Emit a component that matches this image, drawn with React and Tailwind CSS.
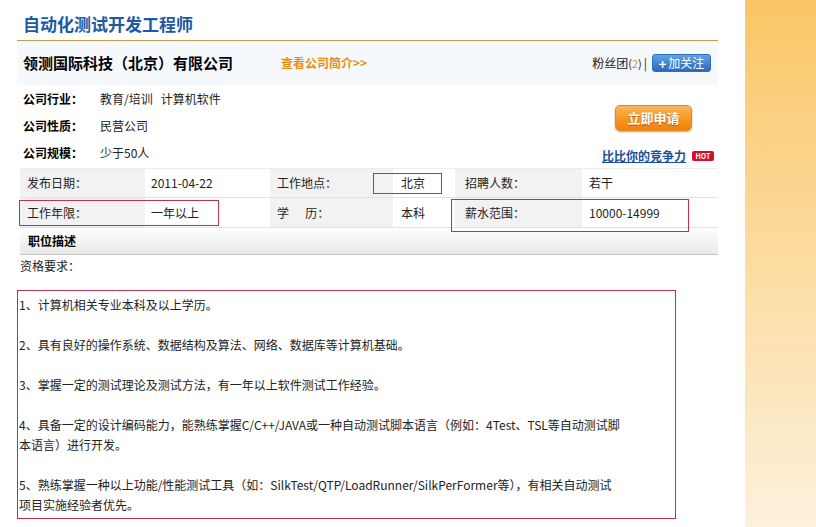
import React from "react"

const FONT = { fontFamily: '"Noto Sans CJK SC", "Noto Sans", sans-serif' }

function InfoRow({ label, value }) {
  return (
    <div className="h-[27px] flex items-center text-[12px]">
      <span className="w-[77px] font-bold text-black">{label}</span>
      <span className="text-[#222]">{value}</span>
    </div>
  )
}

function Cell({ w, gray, pl, children }) {
  return (
    <div className={"h-full flex items-center text-[12px] text-[#222] " + (gray ? "bg-[#f2f2f2]" : "bg-white")}
      style={{ width: w, paddingLeft: pl }}>
      {children}
    </div>
  )
}

export default function App() {
  return (
    <div className="w-[816px] h-[527px] bg-white flex overflow-hidden" style={FONT}>
      <div className="ml-[17px] w-[701px] flex flex-col">
        {/* title */}
        <div className="h-[41px] border-b border-[#c89b4b] pl-[6px] pt-[12px]">
          <h1 className="text-[17px] leading-[24px] font-bold text-[#1d5aa5]">自动化测试开发工程师</h1>
        </div>

        {/* company */}
        <div className="h-[44px] bg-[#f5f8fc] flex items-center pl-[6px] pr-[7px]">
          <span className="w-[258px] text-[15px] font-bold text-black">领测国际科技（北京）有限公司</span>
          <a className="text-[12px] font-bold text-[#ef8a10]">查看公司简介&gt;&gt;</a>
          <div className="ml-auto flex items-center text-[12px] text-[#222]">
            <span>粉丝团<span className="text-[11px]">(<span className="text-[#e08a2a]">2</span>)</span></span>
            <span className="ml-[2px] mr-[5px]">|</span>
            <button className="h-[18px] w-[59px] rounded-[3px] border border-[#2f6fb8] bg-gradient-to-b from-[#5fa2e6] to-[#2a6bc0] text-white text-[12px] flex items-center justify-center gap-[2px] leading-none">
              <span className="font-bold text-[13px]">+</span>加关注
            </button>
          </div>
        </div>

        {/* company info */}
        <div className="flex pl-[6px] h-[83px]">
          <div className="flex-1">
            <InfoRow label="公司行业：" value={<>教育/培训&nbsp;&nbsp;&nbsp;计算机软件</>} />
            <InfoRow label="公司性质：" value="民营公司" />
            <InfoRow label="公司规模：" value="少于50人" />
          </div>
          <div className="flex flex-col items-end pr-[4px] pt-[20px]">
            <button className="mr-[22px] h-[26px] w-[77px] rounded-[5px] border border-[#e08a1e] bg-gradient-to-b from-[#fbb65a] via-[#f99a22] to-[#f2800c] text-white text-[13px] font-bold shadow-[0_1px_2px_rgba(0,0,0,0.35)] [text-shadow:0_1px_1px_rgba(120,60,0,0.6)]">
              立即申请
            </button>
            <div className="mt-[16px] flex items-center gap-[6px]">
              <a className="text-[12px] font-bold text-[#1a4f9c] underline">比比你的竞争力</a>
              <span className="h-[10px] w-[22px] rounded-[2px] bg-[#d0102a] text-white text-[7px] font-bold leading-[10px] text-center">HOT</span>
            </div>
          </div>
        </div>

        {/* job table */}
        <div className="relative ml-[3px] w-[698px] border-t border-[#ececec]">
          <div className="h-[29px] flex border-b border-[#e2e2e2]">
            <Cell w={125} gray pl={7}>发布日期：</Cell>
            <Cell w={125} pl={6}>2011-04-22</Cell>
            <Cell w={123} gray pl={7}>工作地点：</Cell>
            <Cell w={62} pl={8}>北京</Cell>
            <Cell w={127} gray pl={10}>招聘人数：</Cell>
            <Cell w={136} pl={7}>若干</Cell>
          </div>
          <div className="h-[30px] flex border-b border-[#e2e2e2]">
            <Cell w={125} gray pl={7}>工作年限：</Cell>
            <Cell w={125} pl={6}>一年以上</Cell>
            <Cell w={123} gray pl={7}>学&nbsp;&nbsp;&nbsp;&nbsp;&nbsp;&nbsp;历：</Cell>
            <Cell w={62} pl={8}>本科</Cell>
            <Cell w={127} gray pl={10}>薪水范围：</Cell>
            <Cell w={136} pl={7}>10000-14999</Cell>
          </div>
          <div className="absolute z-10 left-[353px] top-[4px] w-[69px] h-[21px] border border-[#c0304f]" />
          <div className="absolute z-10 left-[-1px] top-[31px] w-[200px] h-[26px] border border-[#c0304f]" />
          <div className="absolute z-10 left-[431px] top-[30px] w-[238px] h-[33px] border border-[#c0304f]" />
        </div>

        {/* description header */}
        <div className="ml-[3px] w-[698px] h-[27px] bg-gradient-to-b from-white to-[#e9e9e9] border-b border-[#c6c6c6] flex items-center pl-[8px]">
          <span className="text-[12px] font-bold text-black">职位描述</span>
        </div>

        <div className="ml-[3px] mt-[1px] text-[12px] leading-[20px] text-[#222]">资格要求：</div>

        <div className="mt-[14px] w-[659px] h-[229px] border border-[#c0304f] pl-[1px] pt-[4px] text-[12px] leading-[20px] text-[#222]">
          <p>1、计算机相关专业本科及以上学历。</p>
          <p>&nbsp;</p>
          <p>2、具有良好的操作系统、数据结构及算法、网络、数据库等计算机基础。</p>
          <p>&nbsp;</p>
          <p>3、掌握一定的测试理论及测试方法，有一年以上软件测试工作经验。</p>
          <p>&nbsp;</p>
          <p>4、具备一定的设计编码能力，能熟练掌握C/C++/JAVA或一种自动测试脚本语言（例如：4Test、TSL等自动测试脚</p>
          <p>本语言）进行开发。</p>
          <p>&nbsp;</p>
          <p>5、熟练掌握一种以上功能/性能测试工具（如：SilkTest/QTP/LoadRunner/SilkPerFormer等），有相关自动测试</p>
          <p>项目实施经验者优先。</p>
        </div>
      </div>

      <div className="flex-1" />
      <div className="w-[71px] h-full bg-gradient-to-b from-[#fac665] via-[#fcdca0] to-[#fdf1dd]" />
    </div>
  )
}
